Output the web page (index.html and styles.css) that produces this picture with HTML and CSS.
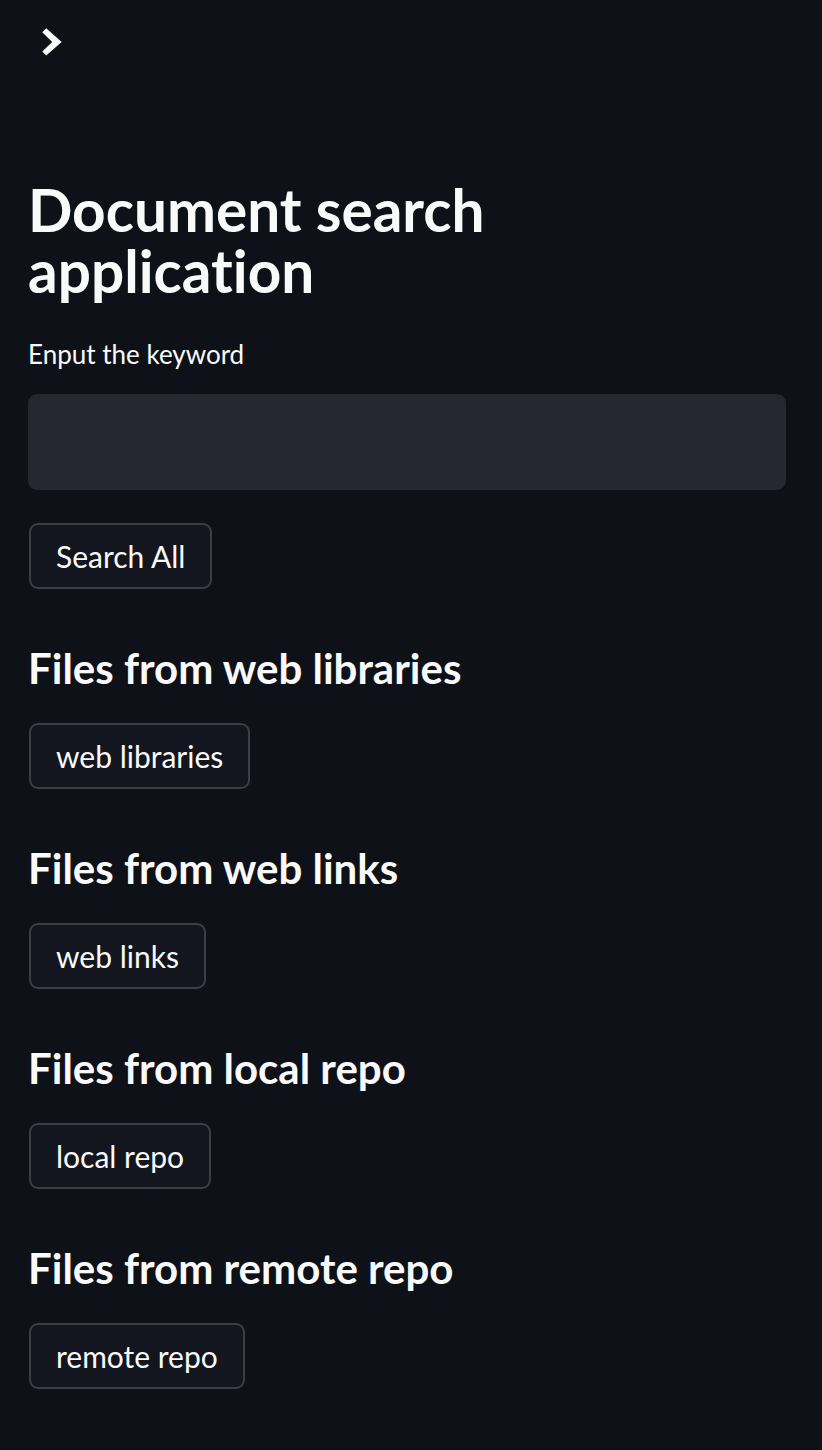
FILE: index.html
```html
<!DOCTYPE html>
<html lang="en">
<head>
<meta charset="utf-8">
<title>Document search application</title>
<link rel="stylesheet" href="styles.css">
</head>
<body>
<header class="header">
  <button class="sidebar-toggle" aria-label="Open sidebar">
    <svg class="chevron" viewBox="0 0 20 28" width="20" height="28" aria-hidden="true">
      <path d="M0.3 4.2 L4.2 0.3 L19.7 14 L4.2 27.4 L0.3 23.6 L10.2 14 Z" fill="#fafafa"/>
    </svg>
  </button>
</header>
<main class="main">
  <h1 class="title">Document search application</h1>
  <label class="field-label" for="kw">Enput the keyword</label>
  <input class="text-input" id="kw" type="text">
  <button class="btn btn-first">Search All</button>

  <section class="section">
    <h3 class="section-title">Files from web libraries</h3>
    <button class="btn">web libraries</button>
  </section>
  <section class="section">
    <h3 class="section-title">Files from web links</h3>
    <button class="btn">web links</button>
  </section>
  <section class="section">
    <h3 class="section-title">Files from local repo</h3>
    <button class="btn">local repo</button>
  </section>
  <section class="section">
    <h3 class="section-title">Files from remote repo</h3>
    <button class="btn">remote repo</button>
  </section>
</main>
</body>
</html>
```
FILE: styles.css
```css
html, body {
  margin: 0;
  padding: 0;
  background: #0e1117;
  color: #fafafa;
  font-family: Lato, "Open Sans", sans-serif;
  font-variant-ligatures: none;
}

.header {
  display: flex;
  padding: 28px 0 0 42px;
  height: 28px;
}

.sidebar-toggle {
  display: flex;
  padding: 0;
  margin: 0;
  border: 0;
  background: transparent;
  cursor: pointer;
}

.chevron {
  display: block;
}

.main {
  display: flex;
  flex-direction: column;
  align-items: stretch;
  padding: 0 36px 40px 28px;
}

.title {
  margin: 123px 0 0;
  max-width: 620px;
  font-size: 58.5px;
  line-height: 61px;
  font-weight: 700;
  letter-spacing: 0;
}

.field-label {
  margin-top: 35px;
  font-size: 26px;
  line-height: 36px;
  font-weight: 400;
}

.text-input {
  margin-top: 22px;
  height: 96px;
  box-sizing: border-box;
  border: 0;
  border-radius: 9px;
  background: #262730;
  color: #fafafa;
  font-family: inherit;
  font-size: 30px;
  padding: 0 20px;
  outline: none;
}

.btn {
  align-self: flex-start;
  display: inline-flex;
  align-items: center;
  box-sizing: border-box;
  height: 66px;
  padding: 0 25px;
  margin-left: 1px;
  border: 2px solid #3b3e45;
  border-radius: 9px;
  background: #13161e;
  color: #fafafa;
  font-family: inherit;
  font-size: 30px;
  line-height: 36px;
  font-weight: 400;
  cursor: pointer;
}

.btn-first {
  margin-top: 33px;
}

.section {
  display: flex;
  flex-direction: column;
  align-items: flex-start;
  gap: 30.5px;
  margin-top: 53.5px;
}

.section-title {
  margin: 0;
  font-size: 42px;
  line-height: 50px;
  font-weight: 700;
}
```
